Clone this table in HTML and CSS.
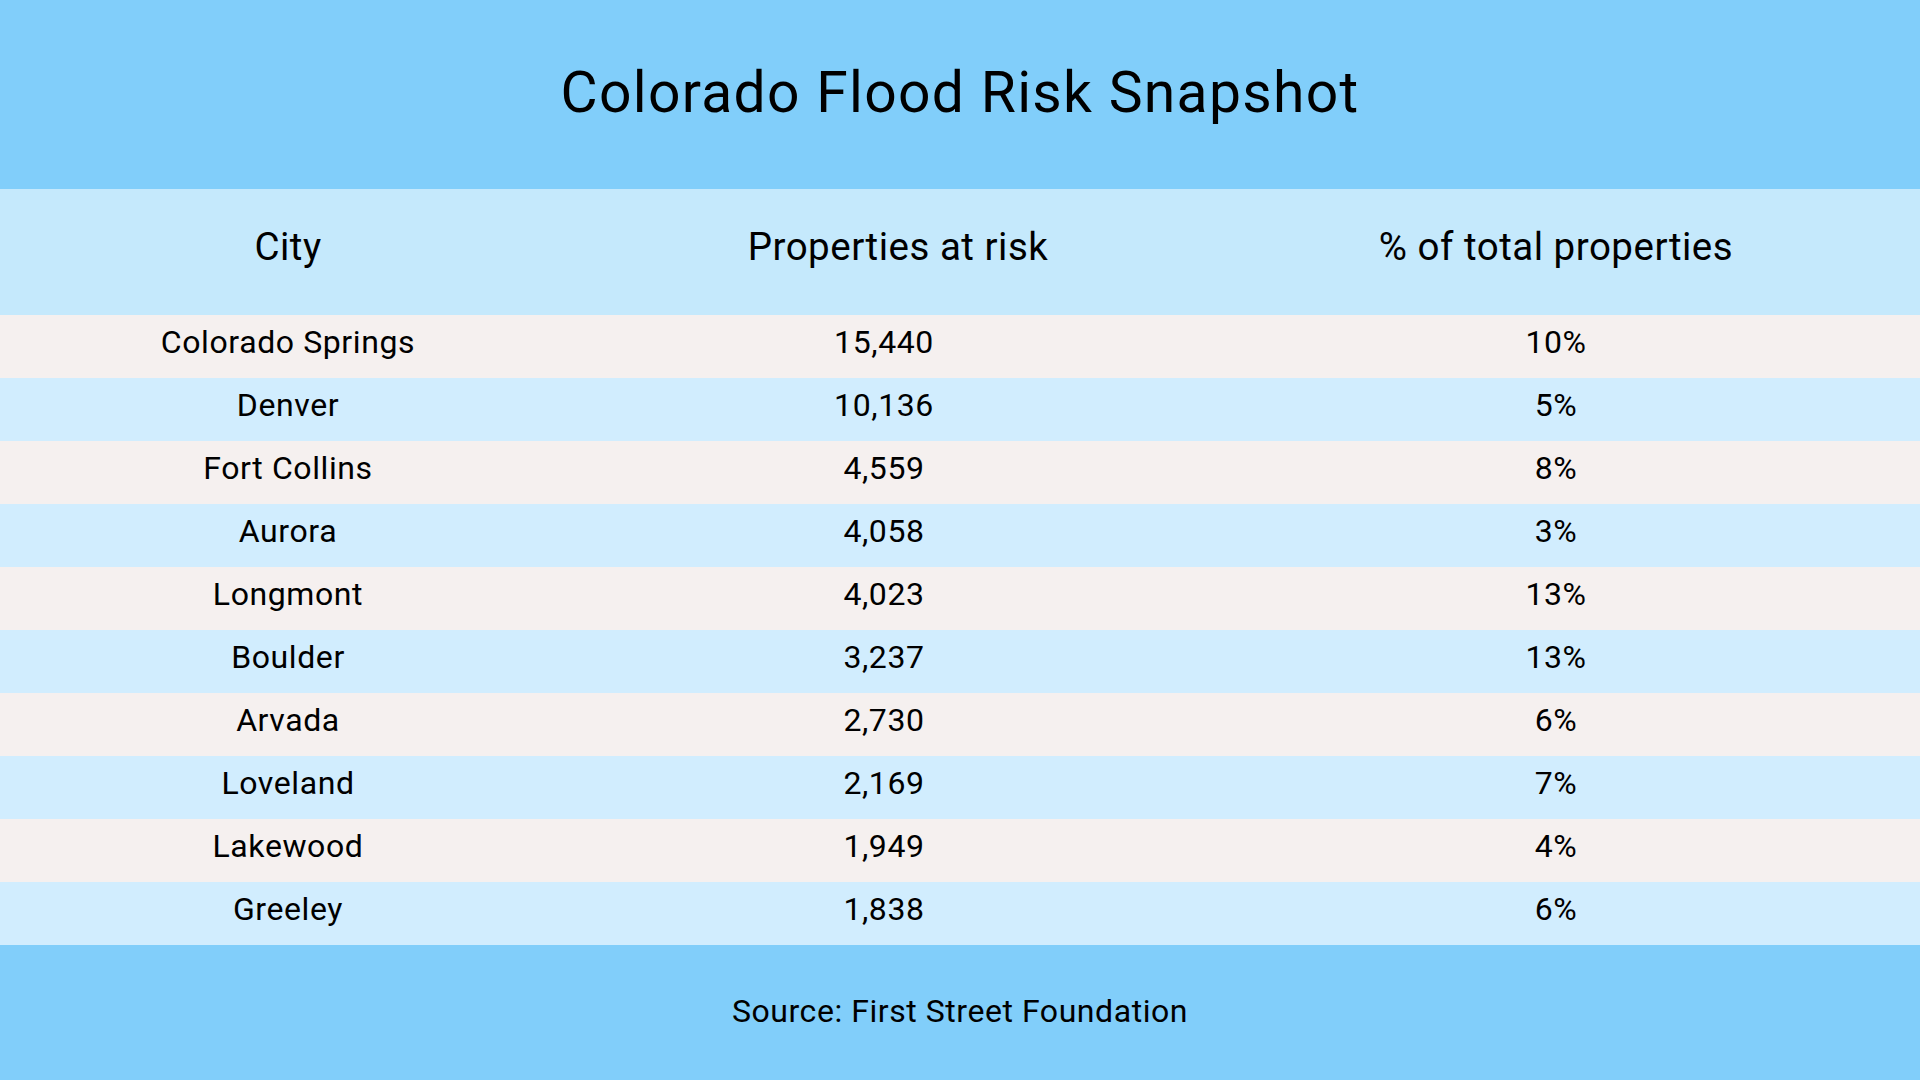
FILE: index.html
```html
<!DOCTYPE html>
<html lang="en">
<head>
<meta charset="utf-8">
<title>Colorado Flood Risk Snapshot</title>
<link rel="stylesheet" href="styles.css">
</head>
<body>
<div class="page">
  <header class="title-band">
    <h1 class="title">Colorado Flood Risk Snapshot</h1>
  </header>
  <table class="data">
    <colgroup>
      <col class="c1"><col class="c2"><col class="c3">
    </colgroup>
    <thead>
      <tr class="head-row">
        <th>City</th>
        <th class="shift">Properties at risk</th>
        <th>% of total properties</th>
      </tr>
    </thead>
    <tbody>
      <tr class="odd"><td>Colorado Springs</td><td>15,440</td><td>10%</td></tr>
      <tr class="even"><td>Denver</td><td>10,136</td><td>5%</td></tr>
      <tr class="odd"><td>Fort Collins</td><td>4,559</td><td>8%</td></tr>
      <tr class="even"><td>Aurora</td><td>4,058</td><td>3%</td></tr>
      <tr class="odd"><td>Longmont</td><td>4,023</td><td>13%</td></tr>
      <tr class="even"><td>Boulder</td><td>3,237</td><td>13%</td></tr>
      <tr class="odd"><td>Arvada</td><td>2,730</td><td>6%</td></tr>
      <tr class="even"><td>Loveland</td><td>2,169</td><td>7%</td></tr>
      <tr class="odd"><td>Lakewood</td><td>1,949</td><td>4%</td></tr>
      <tr class="even"><td>Greeley</td><td>1,838</td><td>6%</td></tr>
    </tbody>
  </table>
  <footer class="footer-band">
    <p class="source">Source: First Street Foundation</p>
  </footer>
</div>
</body>
</html>
```

FILE: styles.css
```css
html, body {
  margin: 0;
  padding: 0;
}
body {
  font-family: Roboto, "Liberation Sans", sans-serif;
  color: #000;
  background: #81cefa;
}
.page {
  width: 1920px;
  height: 1080px;
  display: flex;
  flex-direction: column;
}
.title-band {
  height: 189px;
  flex: none;
  background: #81cefa;
  display: flex;
  align-items: center;
  justify-content: center;
}
.title {
  margin: 0;
  font-size: 57px;
  font-weight: 400;
  line-height: 1;
  letter-spacing: 1.3px;
  padding-bottom: 5px;
}
.data {
  width: 1920px;
  flex: none;
  border-collapse: collapse;
  table-layout: fixed;
}
.c1 { width: 576px; }
.c2 { width: 616px; }
.c3 { width: 728px; }
.data th, .data td {
  padding: 0;
  text-align: center;
  font-weight: 400;
  line-height: 1;
}
.head-row {
  background: #c5e9fc;
}
.data th {
  height: 117px;
  padding-bottom: 9px;
  font-size: 38.5px;
  letter-spacing: 0.5px;
}
.data th.shift {
  padding-left: 28px;
}
.data td {
  height: 53px;
  padding-bottom: 10px;
  font-size: 32px;
  letter-spacing: 0.6px;
}
.odd { background: #f5f0ef; }
.even { background: #d1edfe; }
.footer-band {
  flex: 1;
  background: #81cefa;
  display: flex;
  align-items: center;
  justify-content: center;
}
.source {
  margin: 0;
  font-size: 32px;
  line-height: 1;
  letter-spacing: 0.55px;
  padding-bottom: 4px;
}
```
